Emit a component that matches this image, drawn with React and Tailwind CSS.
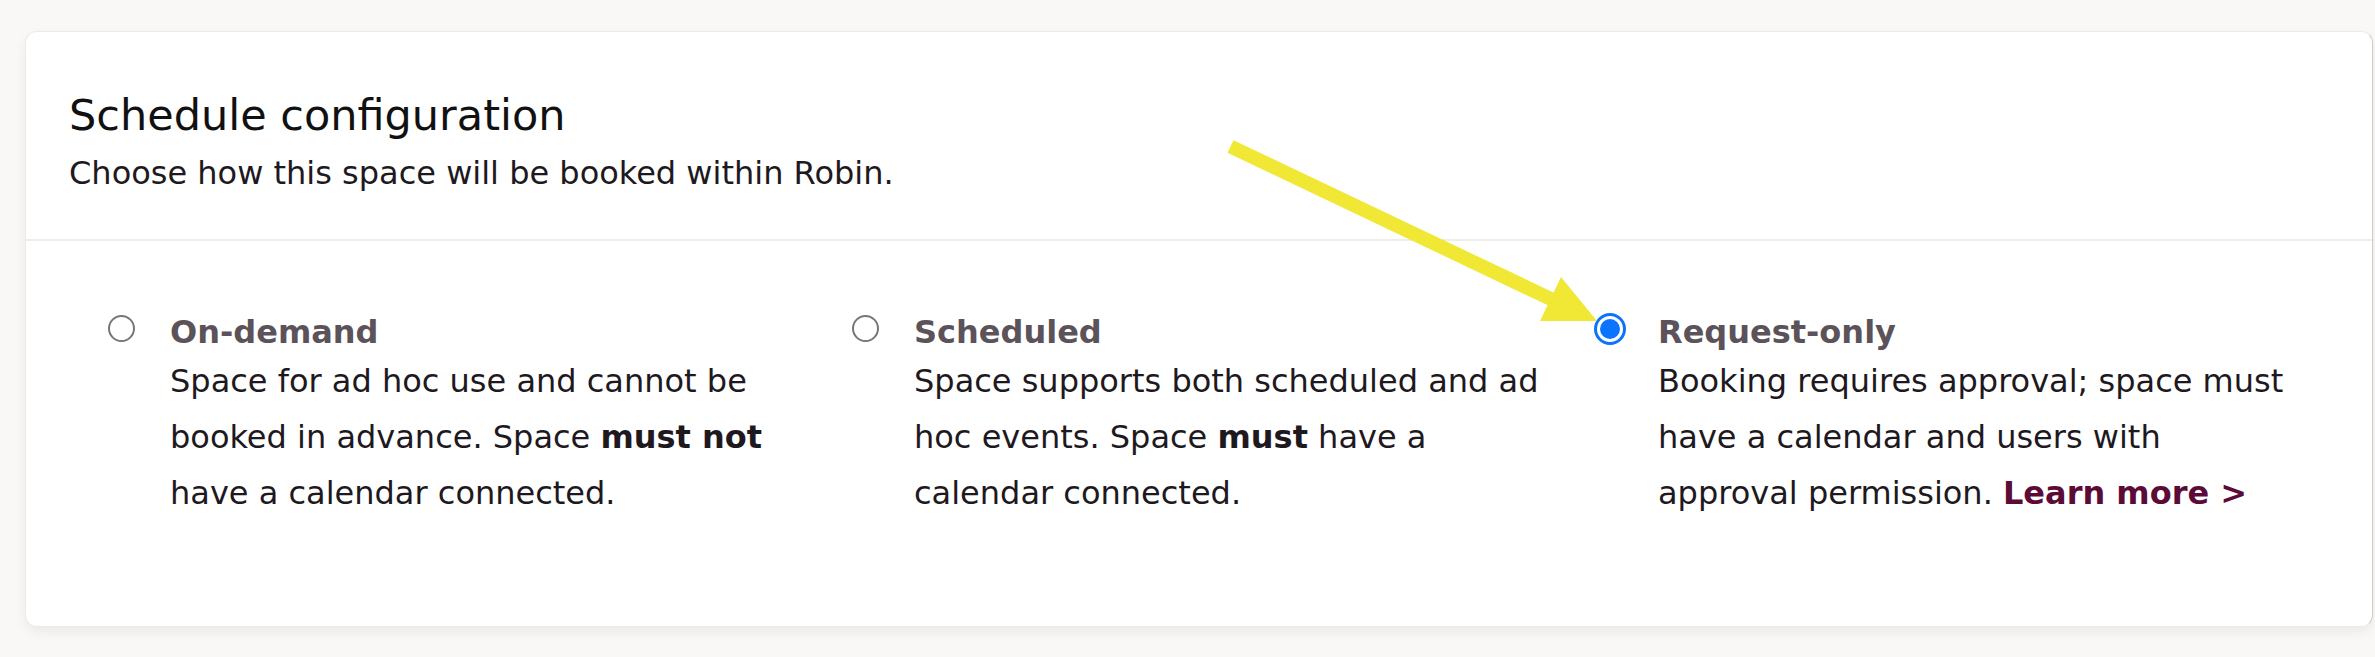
import React from "react";

const options = [
  {
    id: "on-demand",
    label: "On-demand",
    lines: [
      <>Space for ad hoc use and cannot be</>,
      <>
        booked in advance. Space <span className="font-bold">must not</span>
      </>,
      <>have a calendar connected.</>,
    ],
  },
  {
    id: "scheduled",
    label: "Scheduled",
    lines: [
      <>Space supports both scheduled and ad</>,
      <>
        hoc events. Space <span className="font-bold">must</span> have a
      </>,
      <>calendar connected.</>,
    ],
  },
  {
    id: "request-only",
    label: "Request-only",
    lines: [
      <>Booking requires approval; space must</>,
      <>have a calendar and users with</>,
      <>
        approval permission.{" "}
        <a href="#" className="font-bold text-[#5c0b37]">
          Learn more &gt;
        </a>
      </>,
    ],
  },
];

function Radio({ checked }) {
  if (checked) {
    return (
      <div className="mt-[3px] flex h-[27px] w-[27px] shrink-0 items-center justify-center">
        <div className="flex h-[32px] w-[32px] shrink-0 items-center justify-center rounded-full border-[3px] border-[#0a74ff] bg-white">
          <div className="h-[20px] w-[20px] rounded-full bg-[#0a74ff]" />
        </div>
      </div>
    );
  }
  return (
    <div className="mt-[3px] h-[27px] w-[27px] shrink-0 rounded-full border-2 border-[#777777] bg-white" />
  );
}

function Option({ option, checked }) {
  return (
    <label className="flex w-[744px] shrink-0 cursor-pointer">
      <Radio checked={checked} />
      <div className="ml-[35px]">
        <div className="text-[32px] font-bold leading-[40px] text-[#5b5359]">
          {option.label}
        </div>
        <div className="mt-[1px] text-[32px] leading-[56px] text-[#1e191e]">
          {option.lines.map((line, i) => (
            <div key={i} className="whitespace-nowrap">
              {line}
            </div>
          ))}
        </div>
      </div>
    </label>
  );
}

export default function App() {
  const selected = "request-only";

  return (
    <div className="relative min-h-screen bg-[#f9f8f6] pl-[25px] pt-[31px] font-['DejaVu_Sans',sans-serif]">
      <div className="w-[2348px] rounded-[12px] border border-[#eeebe5] border-r-[#cfcdca] bg-white shadow-[0_5px_12px_rgba(0,0,0,0.06)]">
        <div className="pb-[46px] pl-[43px] pt-[58px]">
          <h2 className="text-[43px] font-normal leading-[50px] text-[#111]">
            Schedule configuration
          </h2>
          <p className="mt-[13px] text-[32px] leading-[40px] text-[#1e191e]">
            Choose how this space will be booked within Robin.
          </p>
        </div>

        <div className="border-t-2 border-[#efede8] pb-[105px] pl-[82px] pt-[71px]">
          <div className="flex">
            {options.map((o) => (
              <Option key={o.id} option={o} checked={o.id === selected} />
            ))}
          </div>
        </div>
      </div>

      {/* annotation arrow */}
      <svg
        className="pointer-events-none absolute left-0 top-0"
        width="2375"
        height="657"
        viewBox="0 0 2375 657"
      >
        <line
          x1="1230.5"
          y1="146.5"
          x2="1552"
          y2="299.5"
          stroke="#f1e735"
          strokeWidth="14"
        />
        <polygon points="1597,321 1540,321 1561,277" fill="#f1e735" />
      </svg>
    </div>
  );
}
